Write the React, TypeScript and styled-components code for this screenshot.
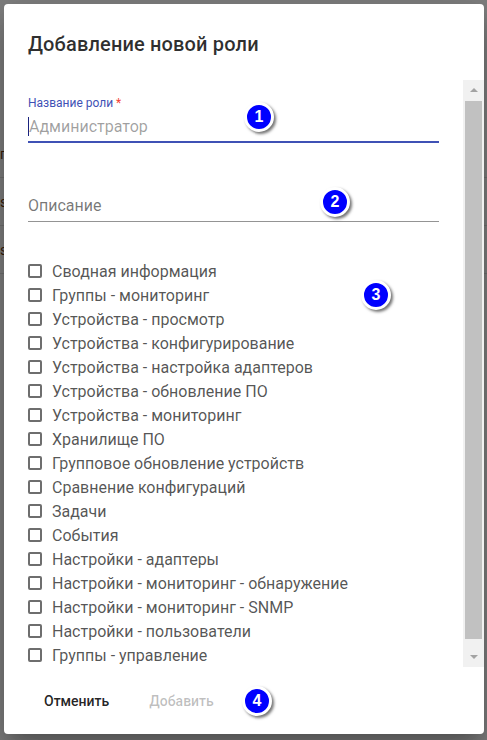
import React from 'react';
import styled, { createGlobalStyle } from 'styled-components';

const GlobalStyle = createGlobalStyle`
  html, body {
    margin: 0;
    padding: 0;
  }
  body {
    font-family: Roboto, "Noto Sans", "Liberation Sans", sans-serif;
    -webkit-font-smoothing: antialiased;
  }
`;

const Page = styled.div`
  position: relative;
  width: 100%;
  height: 740px;
  overflow: hidden;
  background: #fff;
`;

const BgTable = styled.div`
  padding-top: 130px;
`;

const BgRow = styled.div`
  height: 48px;
  box-sizing: border-box;
  border-bottom: 1px solid #e0e0e0;
  display: flex;
  align-items: center;
  font-size: 14px;
  color: #6b3a10;
`;

const Backdrop = styled.div`
  position: absolute;
  inset: 0;
  background: rgba(0, 0, 0, 0.5);
`;

const ModalRoot = styled.div`
  position: absolute;
  inset: 0;
  display: flex;
  align-items: flex-start;
  padding: 4px 3px 6px 4px;
`;

const Dialog = styled.div`
  position: relative;
  width: 480px;
  height: 730px;
  display: flex;
  flex-direction: column;
  background: #fff;
  border-radius: 4px;
  box-shadow: 0 11px 15px -7px rgba(0, 0, 0, 0.2),
    0 24px 38px 3px rgba(0, 0, 0, 0.14), 0 9px 46px 8px rgba(0, 0, 0, 0.12);
`;

const Title = styled.h2`
  margin: 0;
  padding: 24px 24px 20px;
  font-size: 20px;
  font-weight: 500;
  line-height: 32px;
  letter-spacing: 0.0075em;
  color: rgba(0, 0, 0, 0.82);
`;

const Body = styled.div`
  flex: 1;
  min-height: 0;
  display: flex;
`;

const Content = styled.div`
  flex: 1;
  padding: 0 24px;
  overflow: hidden;
`;

const Scrollbar = styled.div`
  width: 21px;
  display: flex;
  flex-direction: column;
  background: #f1f1f1;
`;

const ScrollArrow = styled.div<{ $dir: 'up' | 'down' }>`
  height: 20px;
  display: flex;
  align-items: center;
  justify-content: center;

  &::before {
    content: '';
    width: 0;
    height: 0;
    border-left: 4px solid transparent;
    border-right: 4px solid transparent;
    ${(p) =>
      p.$dir === 'up'
        ? 'border-bottom: 4px solid #a3a3a3;'
        : 'border-top: 4px solid #a3a3a3;'}
  }
`;

const Thumb = styled.div`
  flex: 1;
  margin: 1px 2px 8px;
  background: #c1c1c1;
`;

const FormControl = styled.div<{ $top: number }>`
  margin-top: ${(p) => p.$top}px;
  display: flex;
  flex-direction: column;
`;

const ShrunkLabel = styled.label`
  height: 16px;
  padding-top: 1.5px;
  box-sizing: border-box;
  font-size: 12px;
  line-height: 12px;
  color: #3f51b5;
`;

const Asterisk = styled.span`
  color: #f44336;
`;

const Spacer = styled.div`
  height: 16px;
`;

const InputBox = styled.div<{ $focused?: boolean }>`
  display: flex;
  align-items: center;
  height: 32px;
  box-sizing: border-box;
  padding: 6px 0 ${(p) => (p.$focused ? 5 : 6)}px;
  border-bottom: ${(p) =>
    p.$focused ? '2px solid #3f51b5' : '1px solid rgba(0, 0, 0, 0.42)'};
  font-size: 16px;
  line-height: 19px;
`;

const Caret = styled.span`
  width: 1px;
  height: 19px;
  background: #1a237e;
`;

const Placeholder = styled.span<{ $muted?: boolean }>`
  color: ${(p) => (p.$muted ? 'rgba(0, 0, 0, 0.54)' : 'rgba(0, 0, 0, 0.38)')};
`;

const CheckList = styled.div`
  margin-top: 37px;
  display: flex;
  flex-direction: column;
`;

const CheckRow = styled.label`
  height: 24px;
  display: flex;
  align-items: center;
  gap: 10px;
  font-size: 16px;
  color: rgba(0, 0, 0, 0.68);
`;

const Box = styled.span`
  width: 14px;
  height: 14px;
  box-sizing: border-box;
  border: 2px solid #6e6e6e;
  border-radius: 2px;
  flex-shrink: 0;
`;

const Actions = styled.div`
  height: 67px;
  padding: 0 24px;
  display: flex;
  align-items: center;
  gap: 8px;
`;

const Button = styled.button<{ $disabled?: boolean }>`
  height: 36px;
  padding: 0 16px;
  border: none;
  background: none;
  font-family: inherit;
  font-size: 14px;
  font-weight: 500;
  color: ${(p) => (p.$disabled ? 'rgba(0, 0, 0, 0.26)' : 'rgba(0, 0, 0, 0.87)')};
  cursor: ${(p) => (p.$disabled ? 'default' : 'pointer')};
`;

const Badge = styled.div<{ $x: number; $y: number }>`
  position: absolute;
  left: ${(p) => p.$x}px;
  top: ${(p) => p.$y}px;
  width: 30px;
  height: 30px;
  box-sizing: border-box;
  border: 3px solid #fff;
  border-radius: 50%;
  background: #0000ff;
  box-shadow: 2px 2px 3px rgba(0, 0, 0, 0.55);
  display: flex;
  align-items: center;
  justify-content: center;
  font-family: "Liberation Sans", Arial, sans-serif;
  font-weight: 700;
  font-size: 16px;
  color: #fff;
`;

const permissions = [
  'Сводная информация',
  'Группы - мониторинг',
  'Устройства - просмотр',
  'Устройства - конфигурирование',
  'Устройства - настройка адаптеров',
  'Устройства - обновление ПО',
  'Устройства - мониторинг',
  'Хранилище ПО',
  'Групповое обновление устройств',
  'Сравнение конфигураций',
  'Задачи',
  'События',
  'Настройки - адаптеры',
  'Настройки - мониторинг - обнаружение',
  'Настройки - мониторинг - SNMP',
  'Настройки - пользователи',
  'Группы - управление',
];

const badges = [
  { n: 1, x: 240, y: 98 },
  { n: 2, x: 316, y: 183 },
  { n: 3, x: 357, y: 276 },
  { n: 4, x: 238, y: 682 },
];

const App = () => {
  return (
    <Page>
      <GlobalStyle />
      <BgTable>
        <BgRow>п</BgRow>
        <BgRow>s</BgRow>
        <BgRow>s</BgRow>
      </BgTable>
      <Backdrop />
      <ModalRoot>
        <Dialog>
          <Title>Добавление новой роли</Title>
          <Body>
            <Content>
              <FormControl $top={15}>
                <ShrunkLabel>
                  Название роли <Asterisk>*</Asterisk>
                </ShrunkLabel>
                <InputBox $focused>
                  <Caret />
                  <Placeholder>Администратор</Placeholder>
                </InputBox>
              </FormControl>
              <FormControl $top={31}>
                <Spacer />
                <InputBox>
                  <Placeholder $muted>Описание</Placeholder>
                </InputBox>
              </FormControl>
              <CheckList>
                {permissions.map((p) => (
                  <CheckRow key={p}>
                    <Box />
                    {p}
                  </CheckRow>
                ))}
              </CheckList>
            </Content>
            <Scrollbar>
              <ScrollArrow $dir="up" />
              <Thumb />
              <ScrollArrow $dir="down" />
            </Scrollbar>
          </Body>
          <Actions>
            <Button>Отменить</Button>
            <Button $disabled>Добавить</Button>
          </Actions>
          {badges.map((b) => (
            <Badge key={b.n} $x={b.x} $y={b.y}>
              {b.n}
            </Badge>
          ))}
        </Dialog>
      </ModalRoot>
    </Page>
  );
};

export default App;
